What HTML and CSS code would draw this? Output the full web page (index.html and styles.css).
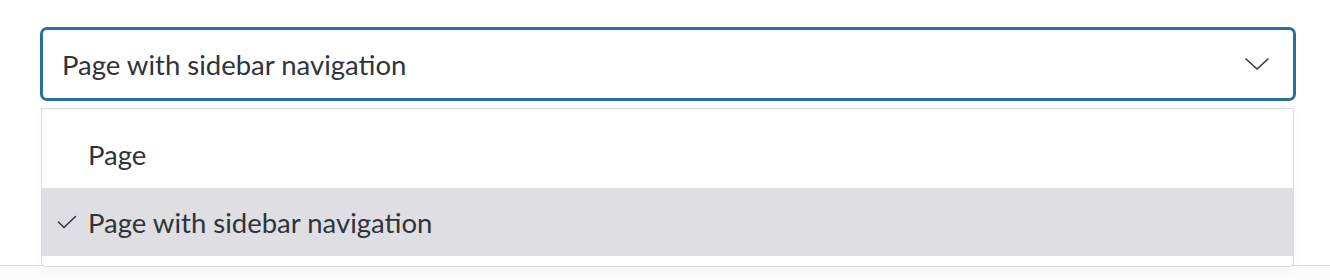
FILE: index.html
```html
<!DOCTYPE html>
<html lang="en">
<head>
<meta charset="utf-8">
<title>Select</title>
<link rel="stylesheet" href="styles.css">
</head>
<body>
<div class="page">
  <div class="field">
    <button class="select" type="button">
      <span class="select-value">Page with sidebar navigation</span>
      <svg class="chevron" viewBox="0 0 24 12" width="24" height="12" aria-hidden="true">
        <path d="M1 1 L12 11 L23 1" fill="none" stroke="#33363b" stroke-width="1.6" stroke-linecap="round" stroke-linejoin="round"/>
      </svg>
    </button>
    <ul class="menu">
      <li class="option"><span class="check"></span><span>Page</span></li>
      <li class="option selected"><span class="check">
        <svg viewBox="0 0 20 14" width="20" height="14" aria-hidden="true">
          <path d="M1.5 7 L7 12.5 L18.5 1.5" fill="none" stroke="#33363b" stroke-width="1.5" stroke-linecap="round" stroke-linejoin="round"/>
        </svg></span><span>Page with sidebar navigation</span></li>
    </ul>
  </div>
  <div class="below"></div>
</div>
</body>
</html>
```

FILE: styles.css
```css
* { box-sizing: border-box; }
html, body { margin: 0; padding: 0; background: #ffffff; }
body {
  font-family: "Lato", "Open Sans", sans-serif;
  color: #2f343a;
}
.page {
  padding: 27px 34px 0 40px;
}
.field {
  position: relative;
  width: 1256px;
}
.select {
  display: flex;
  align-items: center;
  justify-content: space-between;
  width: 100%;
  height: 74px;
  padding: 0 24px 0 19px;
  background: #fff;
  border: 3px solid #2b6f9b;
  border-radius: 7px;
  font: inherit;
  font-size: 27.5px;
  color: #2f343a;
  text-align: left;
}
.chevron { display: block; }
.menu {
  position: absolute;
  left: 1px;
  top: 81px;
  width: 1253px;
  margin: 0;
  padding: 11px 0 10px;
  list-style: none;
  background: #fff;
  border: 1px solid #dcdce0;
  border-radius: 0 0 5px 5px;
  box-shadow: 0 4px 14px rgba(0,0,0,0.04);
  z-index: 2;
}
.option {
  display: flex;
  align-items: center;
  height: 68px;
  padding-left: 15px;
  font-size: 27.5px;
  color: #2f343a;
}
.option.selected { background: #dedee3; }
.check {
  display: flex;
  align-items: center;
  width: 31px;
  height: 20px;
}
.check svg { display: block; }
.below {
  margin-top: 164px;
  margin-left: -40px;
  margin-right: -34px;
  height: 20px;
  border-top: 1px solid #dcdce0;
  background: #fcfcfc;
}
```
